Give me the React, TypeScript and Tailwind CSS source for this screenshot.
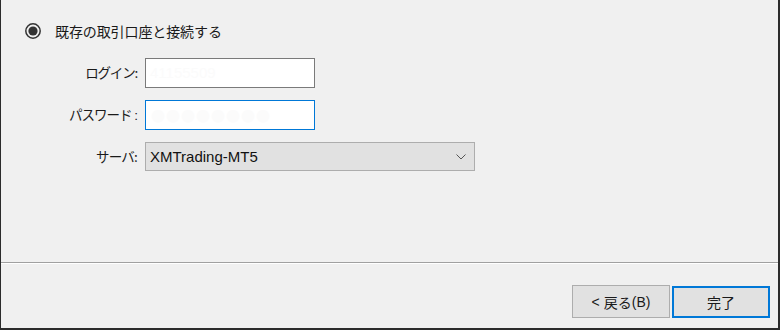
import React from "react";

const jp = { fontFamily: '"Noto Sans CJK JP", "Noto Sans", sans-serif' };
const lat = { fontFamily: '"Liberation Sans", "Noto Sans CJK JP", sans-serif' };

export default function App() {
  return (
    <div
      className="w-[780px] h-[330px] bg-[#f0f0f0] border-l border-r-2 border-b-2 border-[#2b2b2b] flex flex-col text-[#1a1a1a]"
      style={jp}
    >
      <div className="h-[262px] flex-none flex flex-col">
        <div className="flex items-center h-[20px] mt-[21px] pl-[24px]">
          <svg width="16" height="16" viewBox="0 0 16 16">
            <circle cx="8" cy="8" r="7.2" fill="none" stroke="#333" strokeWidth="1.5" />
            <circle cx="8" cy="8" r="4.6" fill="#333" />
          </svg>
          <span className="ml-[14px] text-[14px] leading-none tracking-[-0.1px]">既存の取引口座と接続する</span>
        </div>

        <div className="flex flex-col gap-[12px] mt-[17px]">
          <div className="flex items-center">
            <div className="w-[136px] text-right text-[13.5px] leading-none tracking-[-1.2px]">ログイン:</div>
            <div className="ml-[8px] w-[170px] h-[30px] bg-white border border-[#7a7a7a] flex items-center pl-[4px] text-[15px] text-[#fbfbfb]" style={lat}>
              41155509
            </div>
          </div>
          <div className="flex items-center">
            <div className="w-[136px] text-right text-[13.5px] leading-none tracking-[-1px]">
              パスワード<span style={lat}> :</span>
            </div>
            <div className="ml-[8px] w-[170px] h-[30px] bg-white border border-[#0078d7] flex items-center pl-[5px] text-[14px] text-[#fbfbfb] tracking-[1px]">
              ●●●●●●●●
            </div>
          </div>
          <div className="flex items-center">
            <div className="w-[136px] text-right text-[13.5px] leading-none tracking-[-0.8px]">サーバ:</div>
            <div className="ml-[8px] w-[330px] h-[29px] bg-[#e1e1e1] border border-[#adadad] flex items-center pl-[4px] pr-[8px]">
              <span className="flex-1 text-[15px] leading-none text-[#111]" style={lat}>XMTrading-MT5</span>
              <svg width="10" height="6" viewBox="0 0 10 6">
                <path d="M0.5 0.5 L5 5 L9.5 0.5" fill="none" stroke="#555" strokeWidth="1" />
              </svg>
            </div>
          </div>
        </div>
      </div>

      <div className="h-px bg-[#a0a0a0] flex-none" />
      <div className="h-px bg-white flex-none" />

      <div className="flex justify-end items-start pt-[21px] pr-[8px] gap-[2px]">
        <div className="w-[98px] h-[33px] bg-[#e1e1e1] border border-[#adadad] flex items-center justify-center text-[14px] leading-none">
          <span style={lat}>&lt;</span>
          <span className="ml-[4px]">戻る</span>
          <span style={lat}>(B)</span>
        </div>
        <div className="w-[98px] h-[32px] mt-[1px] bg-[#e1e1e1] border-2 border-[#0078d7] flex items-center justify-center text-[14px] leading-none">
          <span>完了</span>
        </div>
      </div>
    </div>
  );
}
